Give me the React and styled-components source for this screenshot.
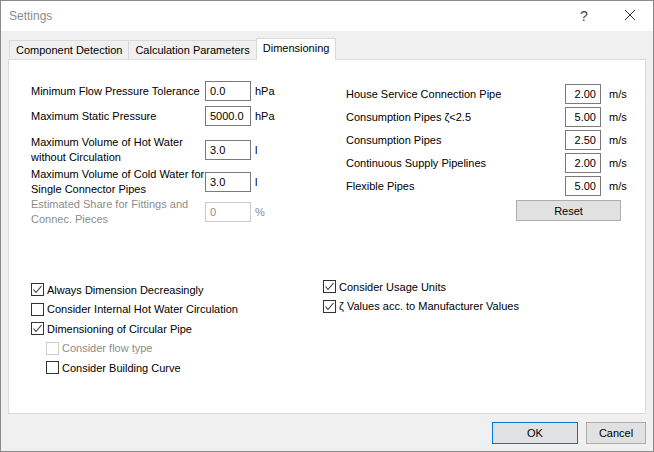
import React from "react";
import styled, { createGlobalStyle } from "styled-components";

const Global = createGlobalStyle`
  body { margin: 0; font-family: "Liberation Sans", Arial, sans-serif; font-size: 11px; }
`;

const Window = styled.div`
  width: 654px; height: 452px; box-sizing: border-box;
  border: 1px solid #8a8a8a; background: #f0f0f0;
  display: flex; flex-direction: column; color: #000;
`;
const TitleBar = styled.div`
  height: 30px; background: #fff; display: flex; align-items: center;
  padding-left: 8px; color: #8c8c8c; font-size: 12px;
`;
const TitleText = styled.div` flex: 1; `;
const TitleBtn = styled.div`
  width: 46px; text-align: center; color: #444; font-size: 14px;
`;
const Body = styled.div`
  flex: 1; padding: 8px 7px 0 7px; display: flex; flex-direction: column;
`;
const Tabs = styled.div` display: flex; height: 20px; align-items: flex-end; padding-left: 2px; `;
const Tab = styled.div`
  height: ${p => (p.$active ? "22px" : "19px")};
  box-sizing: border-box; padding: 0 6px; display: flex; align-items: center;
  background: ${p => (p.$active ? "#fff" : "#f0f0f0")};
  border: 1px solid #d9d9d9; border-bottom: none;
  margin-left: -1px; margin-bottom: ${p => (p.$active ? "-1px" : "0")};
  position: relative; z-index: ${p => (p.$active ? 1 : 0)};
  padding-bottom: ${p => (p.$active ? "3px" : "0")};
`;
const Panel = styled.div`
  height: 355px; box-sizing: border-box; background: #fff; border: 1px solid #d9d9d9;
  padding: 21px 0 0 22px; display: flex; flex-direction: column;
`;
const Top = styled.div` display: flex; height: 185px; `;
const LeftCol = styled.div` width: 315px; `;
const RightCol = styled.div` padding-top: 3px; display: flex; flex-direction: column; `;
const FieldRow = styled.div`
  display: flex; align-items: center; margin-top: ${p => p.$mt || 0}px;
  color: ${p => (p.$disabled ? "#8c8c8c" : "#000")};
`;
const Label = styled.div` width: ${p => p.$w}px; line-height: 15px; `;
const Input = styled.div`
  width: ${p => p.$w}px; height: 20px; box-sizing: border-box;
  border: 1px solid ${p => (p.$disabled ? "#cccccc" : "#7a7a7a")};
  display: flex; align-items: center; padding: 0 4px;
  justify-content: ${p => (p.$right ? "flex-end" : "flex-start")};
  color: ${p => (p.$disabled ? "#8c8c8c" : "#000")};
`;
const Unit = styled.div` margin-left: ${p => p.$ml}px; `;
const ResetBtn = styled.div`
  margin: 4px 0 0 170px; width: 105px; height: 21px; box-sizing: border-box;
  background: #e1e1e1; border: 1px solid #adadad;
  display: flex; align-items: center; justify-content: center;
`;
const Checks = styled.div` display: flex; padding-top: 14px; `;
const CheckCol = styled.div`
  width: ${p => p.$w}px; display: flex; flex-direction: column;
  margin-top: ${p => p.$mt || 0}px;
`;
const CheckRow = styled.div`
  display: flex; align-items: center; height: 19.5px; gap: 3px;
  padding-left: ${p => (p.$indent ? 15 : 0)}px;
  color: ${p => (p.$disabled ? "#8c8c8c" : "#000")};
`;
const Box = styled.div`
  width: 13px; height: 13px; box-sizing: border-box;
  border: 1px solid ${p => (p.$disabled ? "#cccccc" : "#333")}; background: #fff;
  display: flex; align-items: center; justify-content: center;
`;
const Footer = styled.div`
  display: flex; justify-content: flex-end; gap: 8px; padding-top: 8px;
`;
const Btn = styled.div`
  width: ${p => p.$w}px; height: 22px; box-sizing: border-box;
  background: #e1e1e1; border: 1px solid ${p => (p.$primary ? "#0078d7" : "#adadad")};
  display: flex; align-items: center; justify-content: center;
`;

const Check = ({ checked, disabled, indent, children }) => (
  <CheckRow $indent={indent} $disabled={disabled}>
    <Box $disabled={disabled}>
      {checked && (
        <svg width="11" height="11" viewBox="0 0 11 11">
          <path d="M1.5 5.5 L4 8.5 L9.5 2" fill="none" stroke="#333" strokeWidth="1.1" />
        </svg>
      )}
    </Box>
    <span>{children}</span>
  </CheckRow>
);

const left = [
  { l: "Minimum Flow Pressure Tolerance", v: "0.0", u: "hPa", mt: 0 },
  { l: "Maximum Static Pressure", v: "5000.0", u: "hPa", mt: 5 },
  { l: "Maximum Volume of Hot Water without Circulation", v: "3.0", u: "l", mt: 9 },
  { l: "Maximum Volume of Cold Water for Single Connector Pipes", v: "3.0", u: "l", mt: 2 },
  { l: "Estimated Share for Fittings and Connec. Pieces", v: "0", u: "%", mt: 0, d: true },
];
const right = [
  ["House Service Connection Pipe", "2.00"],
  ["Consumption Pipes ζ<2.5", "5.00"],
  ["Consumption Pipes", "2.50"],
  ["Continuous Supply Pipelines", "2.00"],
  ["Flexible Pipes", "5.00"],
];

export default function App() {
  return (
    <>
      <Global />
      <Window>
        <TitleBar>
          <TitleText>Settings</TitleText>
          <TitleBtn>?</TitleBtn>
          <TitleBtn>
            <svg width="12" height="12" viewBox="0 0 12 12">
              <path d="M1 1L11 11M11 1L1 11" stroke="#333" strokeWidth="1" />
            </svg>
          </TitleBtn>
        </TitleBar>
        <Body>
          <Tabs>
            <Tab>Component Detection</Tab>
            <Tab>Calculation Parameters</Tab>
            <Tab $active>Dimensioning</Tab>
          </Tabs>
          <Panel>
            <Top>
              <LeftCol>
                {left.map(r => (
                  <FieldRow key={r.l} $mt={r.mt} $disabled={r.d}>
                    <Label $w={174}>{r.l}</Label>
                    <Input $w={46} $disabled={r.d}>{r.v}</Input>
                    <Unit $ml={4}>{r.u}</Unit>
                  </FieldRow>
                ))}
              </LeftCol>
              <RightCol>
                {right.map(([l, v], i) => (
                  <FieldRow key={l} $mt={i ? 3 : 0}>
                    <Label $w={219}>{l}</Label>
                    <Input $w={36} $right>{v}</Input>
                    <Unit $ml={8}>m/s</Unit>
                  </FieldRow>
                ))}
                <ResetBtn>Reset</ResetBtn>
              </RightCol>
            </Top>
            <Checks>
              <CheckCol $w={292}>
                <Check checked>Always Dimension Decreasingly</Check>
                <Check>Consider Internal Hot Water Circulation</Check>
                <Check checked>Dimensioning of Circular Pipe</Check>
                <Check indent disabled>Consider flow type</Check>
                <Check indent>Consider Building Curve</Check>
              </CheckCol>
              <CheckCol $w={250} $mt={-3}>
                <Check checked>Consider Usage Units</Check>
                <Check checked>ζ Values acc. to Manufacturer Values</Check>
              </CheckCol>
            </Checks>
          </Panel>
          <Footer>
            <Btn $w={86} $primary>OK</Btn>
            <Btn $w={60}>Cancel</Btn>
          </Footer>
        </Body>
      </Window>
    </>
  );
}
